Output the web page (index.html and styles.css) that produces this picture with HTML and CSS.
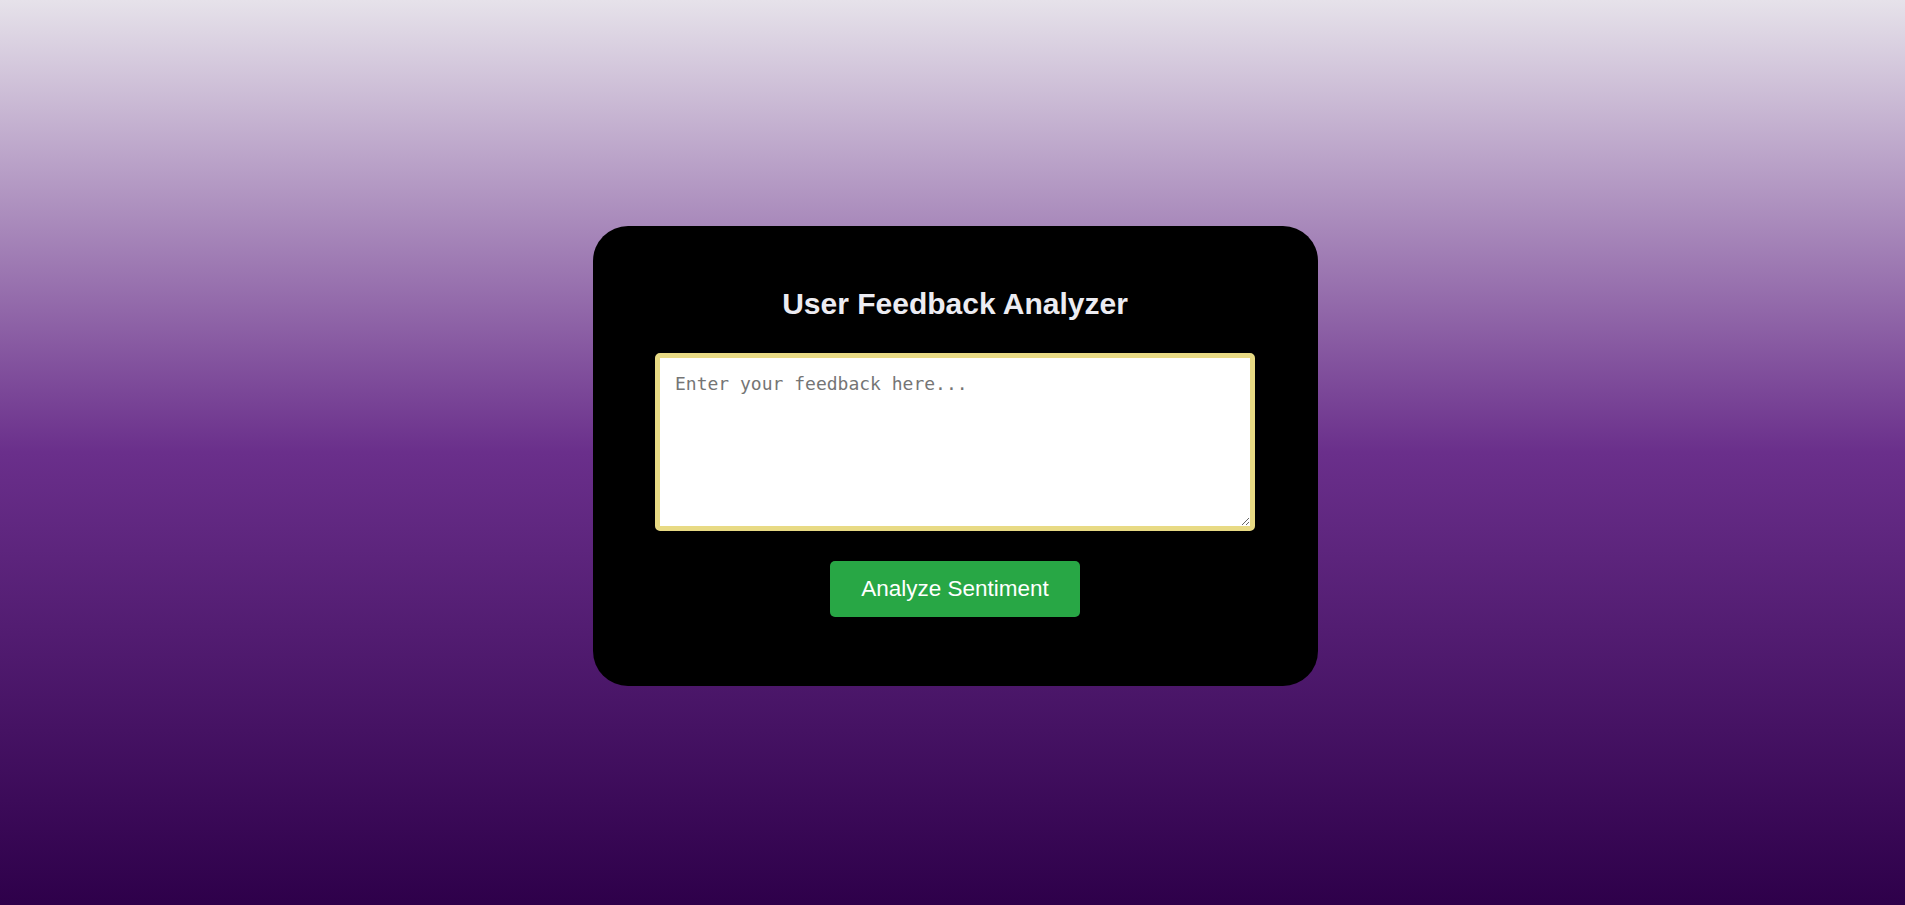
FILE: index.html
```html
<!DOCTYPE html>
<html lang="en">
<head>
<meta charset="utf-8">
<title>User Feedback Analyzer</title>
<link rel="stylesheet" href="styles.css">
</head>
<body>
<main class="card">
  <h1 class="title">User Feedback Analyzer</h1>
  <textarea class="feedback" placeholder="Enter your feedback here..."></textarea>
  <button class="analyze" type="button">Analyze Sentiment</button>
</main>
</body>
</html>
```

FILE: styles.css
```css
html, body {
  margin: 0;
  padding: 0;
}

body {
  min-height: 100vh;
  display: flex;
  align-items: center;
  justify-content: center;
  background: linear-gradient(to bottom, #e6e2ea 0%, #6a2f8b 50%, #2e004a 100%);
  font-family: "Liberation Sans", Arial, sans-serif;
}

.card {
  box-sizing: border-box;
  width: 725px;
  margin: 7px 0 0 6px;
  padding: 60px 63px 69px 62px;
  background: #000;
  border-radius: 35px;
  display: flex;
  flex-direction: column;
  align-items: center;
}

.title {
  margin: 0 0 32px;
  font-size: 30px;
  font-weight: bold;
  line-height: 35px;
  color: #ececf2;
  text-align: center;
}

.feedback {
  box-sizing: border-box;
  width: 600px;
  height: 178px;
  padding: 15px;
  border: 5px solid #e8da84;
  border-radius: 5px;
  background: #fff;
  font-family: "DejaVu Sans Mono", monospace;
  font-size: 18px;
  color: #333;
  outline: none;
  resize: both;
}

.feedback::placeholder {
  color: #757575;
}

.analyze {
  margin-top: 30px;
  box-sizing: border-box;
  width: 250px;
  height: 56px;
  padding: 0;
  border: none;
  border-radius: 5px;
  background: #28a745;
  color: #fff;
  font-family: "Liberation Sans", Arial, sans-serif;
  font-size: 22.5px;
  cursor: pointer;
}
```
